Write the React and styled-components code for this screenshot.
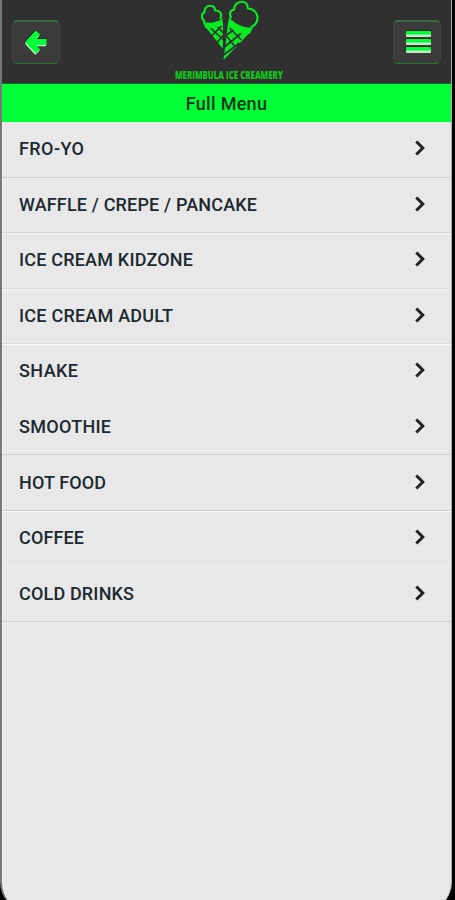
import React from "react";
import styled, { createGlobalStyle } from "styled-components";

const colors = {
  header: "#303030",
  green: "#00ff37",
  logo: "#08ea22",
  logoText: "#10c818",
  page: "#e8e8e8",
  text: "#1c2a30",
};

// line is the bottom edge of a row, shine the light edge under its top
const menuItems = [
  { name: "FRO-YO", width: 65, line: "#cdcdcd", shine: "#e8e8e8" },
  { name: "WAFFLE / CREPE / PANCAKE", width: 238, line: "#d2d2d2", shine: "#ebebeb" },
  { name: "ICE CREAM KIDZONE", width: 174, line: "#dcdcdc", shine: "#f4f4f4" },
  { name: "ICE CREAM ADULT", width: 154, line: "#d9d9d9", shine: "#f6f6f6" },
  { name: "SHAKE", width: 59, line: "#e8e8e8", shine: "#fafafa" },
  { name: "SMOOTHIE", width: 92, line: "#cfcfcf", shine: "#e8e8e8" },
  { name: "HOT FOOD", width: 87, line: "#cccccc", shine: "#ebebeb" },
  { name: "COFFEE", width: 65, line: "#e8e8e8", shine: "#fafafa" },
  { name: "COLD DRINKS", width: 115, line: "#cfcfcf", shine: "#f0f0f0" },
];

function Logo() {
  return (
    <LogoBox>
      <svg width="66" height="62" viewBox="193.5 0 66 62" fill="none">
        {/* cones */}
        <path d="M205 27L222.5 49V22ZM227.5 23L223 60L250 32Z" fill={colors.logo} />
        <g stroke={colors.header} strokeWidth="1.7">
          <path d="M210 28L223 40M217 27L223 33M221 26L211 36M223 35L216 43" />
          <path d="M226 36L234 46M229 28L241 40M241 33L224 47M233 30L226 35M239 43L223 55" />
        </g>
        <path d="M224.7 19L223.4 49" stroke={colors.header} strokeWidth="2.4" />
        {/* scoops */}
        <g stroke={colors.logo} strokeWidth="2.1" strokeLinejoin="round">
          <path d="M204.5 21.5C200.5 19 200.5 14 204 12.3C203.5 8 206.5 5.8 209.5 5.8C213 5.8 214.5 8 214.5 10.5C219 10 222.5 14 219.5 19" />
          <path d="M231 18C228.5 15 229 10.5 233.5 9.8C233.5 5 237 1.8 241 1.8C245 1.8 247.3 4.5 247.3 8.5C253 8.5 257.3 13 257 18C256.8 22.5 254 26.5 250 27" />
        </g>
        <path d="M202 21.5C208 24 214 23 222.5 18.5L221.5 24C216 27.5 210 29.5 205 28Z" fill={colors.logo} />
        <path d="M229 17C233 23.5 243 28.5 252.5 27.5L249.5 33.5C242 36 231 31 227.5 22.5Z" fill={colors.logo} />
      </svg>
      <WordMark width="120" height="14" viewBox="0 0 120 14">
        <LogoText x="8" y="10.5" textLength="108" lengthAdjust="spacingAndGlyphs">
          MERIMBULA ICE CREAMERY
        </LogoText>
      </WordMark>
    </LogoBox>
  );
}

function BackIcon() {
  const arrow = "M36.5 32L27.5 41.5L36.5 51M28.5 41.5H45";
  return (
    <svg width="26" height="28" viewBox="22.5 28 26 28" fill="none">
      <g strokeWidth="5.8" strokeLinejoin="round">
        <path d={arrow} stroke="#242424" transform="translate(.5 -1.5)" />
        <path d={arrow} stroke="#d5efd3" transform="translate(.4 .8)" />
        <path d={arrow} stroke={colors.green} transform="translate(1 -.5)" />
      </g>
    </svg>
  );
}

function MenuRow({ item }) {
  return (
    <Row $line={item.line} $shine={item.shine}>
      <svg width={item.width} height="24">
        <RowText x="0" y="19" textLength={item.width}>
          {item.name}
        </RowText>
      </svg>
      <svg width="12" height="18" viewBox="0 0 12 18" fill="none">
        <path d="M2.3 2.5L8.8 9L2.3 15.5" stroke="#222" strokeWidth="3" />
      </svg>
    </Row>
  );
}

function App() {
  return (
    <Frame>
      <GlobalStyle />
      <Screen>
        <Header>
          <IconButton aria-label="Back">
            <BackIcon />
          </IconButton>
          <Logo />
          <IconButton aria-label="Menu">
            <Bars>
              <Bar />
              <Bar />
              <Bar />
            </Bars>
          </IconButton>
        </Header>
        <Title>Full Menu</Title>
        <MenuList>
          {menuItems.map((item) => (
            <MenuRow key={item.name} item={item} />
          ))}
        </MenuList>
      </Screen>
    </Frame>
  );
}

const GlobalStyle = createGlobalStyle`
  body {
    margin: 0;
    background: #000;
    font-family: Roboto, "Liberation Sans", sans-serif;
  }

  * {
    box-sizing: border-box;
  }
`;

const Frame = styled.div`
  height: 900px;
  padding-right: 3px;
  overflow: hidden;
  background: #000;
`;

const Screen = styled.div`
  height: 912px;
  border-left: 2px solid #777;
  border-right: 1px solid #aaa;
  border-radius: 0 0 30px 30px;
  background: ${colors.page};
  box-shadow: inset 1px 0 0 #f6f6f6;
  overflow: hidden;
`;

const Header = styled.header`
  display: flex;
  justify-content: space-between;
  height: 84px;
  padding: 0 10px;
  border-bottom: 1px solid #1b6b2a;
  background: ${colors.header};
`;

const IconButton = styled.button`
  display: flex;
  align-items: center;
  justify-content: center;
  width: 48px;
  height: 44px;
  margin-top: 20px;
  padding: 0;
  border: 1px solid #3b453b;
  border-top: 2px solid #3c6840;
  border-bottom-color: #267a2b;
  border-radius: 5px;
  background: #3b3b3b;
`;

const Bars = styled.span`
  display: flex;
  flex-direction: column;
  gap: 2px;
  padding: 0 0 2px 2px;
`;

const Bar = styled.span`
  width: 25px;
  height: 6px;
  border-radius: 1px;
  background: linear-gradient(${colors.green} 45%, #c9e8c8 75%);
  box-shadow: 0 -1px 0 #202020;
`;

const LogoBox = styled.div`
  display: flex;
  flex-direction: column;
  align-items: center;
  gap: 6px;
`;

const WordMark = styled.svg`
  overflow: visible;
`;

const LogoText = styled.text`
  fill: ${colors.logoText};
  font-family: "Open Sans", sans-serif;
  font-size: 10.5px;
  font-weight: 800;
`;

const Title = styled.h1`
  height: 38px;
  margin: 0;
  background: ${colors.green};
  color: #10351c;
  font-size: 18px;
  font-weight: 500;
  line-height: 39px;
  letter-spacing: 0.3px;
  text-align: center;
`;

const MenuList = styled.div`
  display: flex;
  flex-direction: column;
`;

const Row = styled.div`
  display: flex;
  align-items: center;
  justify-content: space-between;
  height: 55.56px;
  padding: 0 25px 2px 17px;
  border-bottom: 1px solid ${(props) => props.$line};
  box-shadow: inset 0 1px 0 ${(props) => props.$shine};
`;

const RowText = styled.text`
  fill: ${colors.text};
  font-size: 18px;
  font-weight: 500;
`;

export default App;
